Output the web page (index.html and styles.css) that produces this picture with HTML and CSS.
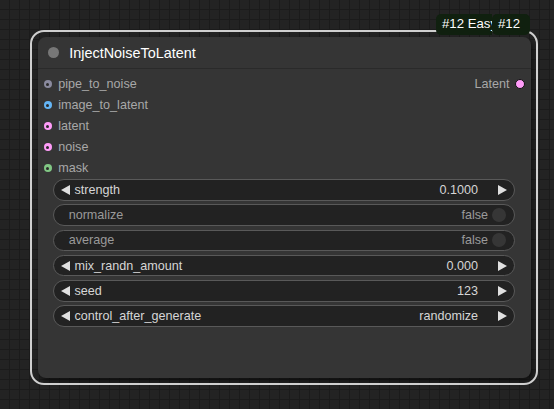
FILE: index.html
```html
<!DOCTYPE html>
<html>
<head>
<meta charset="utf-8">
<link rel="stylesheet" href="styles.css">
</head>
<body>
<div class="canvas">
  <div class="node">
    <div class="title">
      <span class="title-dot"></span>
      <span class="title-text">InjectNoiseToLatent</span>
    </div>
    <div class="body">
      <div class="slots">
        <div class="slot">
          <span class="in"><span class="dot c-pipe"></span>pipe_to_noise</span>
          <span class="out">Latent<span class="odot"></span></span>
        </div>
        <div class="slot"><span class="in"><span class="dot c-image"></span>image_to_latent</span></div>
        <div class="slot"><span class="in"><span class="dot c-latent"></span>latent</span></div>
        <div class="slot"><span class="in"><span class="dot c-latent"></span>noise</span></div>
        <div class="slot"><span class="in"><span class="dot c-mask"></span>mask</span></div>
      </div>
      <div class="widgets">
        <div class="widget num"><span class="arrow left"></span><span class="label">strength</span><span class="value">0.1000</span><span class="arrow right"></span></div>
        <div class="widget toggle"><span class="label dim">normalize</span><span class="value dim">false</span><span class="knob"></span></div>
        <div class="widget toggle"><span class="label dim">average</span><span class="value dim">false</span><span class="knob"></span></div>
        <div class="widget num"><span class="arrow left"></span><span class="label">mix_randn_amount</span><span class="value">0.000</span><span class="arrow right"></span></div>
        <div class="widget num"><span class="arrow left"></span><span class="label">seed</span><span class="value">123</span><span class="arrow right"></span></div>
        <div class="widget num"><span class="arrow left"></span><span class="label">control_after_generate</span><span class="value">randomize</span><span class="arrow right"></span></div>
      </div>
    </div>
  </div>
  <div class="badges">
    <div class="badge first">#12 Easy</div>
    <div class="badge second">#12</div>
  </div>
</div>
</body>
</html>
```
FILE: styles.css
```css
html, body {
  margin: 0;
  padding: 0;
}
body {
  width: 554px;
  height: 409px;
  overflow: hidden;
  background-color: #232323;
  background-image:
    linear-gradient(#1b1b1b 1px, transparent 1px),
    linear-gradient(90deg, #1b1b1b 1px, transparent 1px);
  background-size: 10px 10px;
  background-position: 9px 9px;
  font-family: "Liberation Sans", Arial, sans-serif;
}
.canvas {
  position: relative;
  width: 554px;
  height: 409px;
}
.node {
  position: absolute;
  left: 37.7px;
  top: 36.7px;
  width: 493px;
  height: 341.6px;
  background: #353535;
  border-radius: 8px;
  box-shadow: 2px 3px 5px rgba(0, 0, 0, 0.55);
  display: flex;
  flex-direction: column;
}
.node::before {
  content: "";
  position: absolute;
  left: -7.3px;
  top: -6.3px;
  right: -7.6px;
  bottom: -6.6px;
  border: 2px solid #cfcfcf;
  border-radius: 14px;
  pointer-events: none;
}
.title {
  height: 32px;
  box-sizing: border-box;
  border-bottom: 1px solid #2a2a2a;
  display: flex;
  align-items: center;
  padding-left: 10.2px;
}
.title-dot {
  width: 11px;
  height: 11px;
  border-radius: 50%;
  background: #777;
  flex: none;
}
.title-text {
  margin-left: 10.4px;
  font-size: 14.4px;
  color: #fff;
  position: relative;
  top: 1px;
}
.body {
  padding-top: 5px;
  display: flex;
  flex-direction: column;
}
.slot {
  height: 21px;
  display: flex;
  align-items: center;
  justify-content: space-between;
  padding: 0 5.7px 0 6px;
  font-size: 12.6px;
  color: #a8a8a8;
}
.in, .out {
  display: flex;
  align-items: center;
}
.dot {
  width: 8px;
  height: 8px;
  border-radius: 50%;
  margin-right: 6.6px;
  display: flex;
  align-items: center;
  justify-content: center;
  flex: none;
}
.dot::after {
  content: "";
  width: 3px;
  height: 3px;
  border-radius: 50%;
  background: #2a2a2a;
}
.c-pipe { background: #8a8a9e; }
.c-image { background: #64b5f6; }
.c-latent { background: #ff9cf9; }
.c-mask { background: #81c784; }
.odot {
  width: 8px;
  height: 8px;
  border-radius: 50%;
  background: #ff9cf9;
  border: 1px solid #111;
  margin-left: 5.5px;
}
.widgets {
  margin-top: 0.5px;
  padding: 0 16px 0 15.6px;
  display: flex;
  flex-direction: column;
  gap: 3.6px;
}
.widget {
  height: 21.6px;
  box-sizing: border-box;
  border: 1px solid #595959;
  border-radius: 11px;
  background: #222;
  display: flex;
  align-items: center;
  font-size: 12.6px;
  color: #d6d6d6;
}
.widget.num {
  padding: 0 6.7px;
}
.arrow {
  width: 0;
  height: 0;
  border-top: 5px solid transparent;
  border-bottom: 5px solid transparent;
  flex: none;
}
.arrow.left {
  border-right: 9.5px solid #e0e0e0;
}
.arrow.right {
  border-left: 9.5px solid #e0e0e0;
  margin-left: 20px;
}
.num .label {
  margin-left: 4.5px;
}
.value {
  margin-left: auto;
}
.widget.toggle {
  padding: 0 7.7px 0 14.4px;
}
.dim {
  color: #9a9a9a;
}
.knob {
  width: 14px;
  height: 14px;
  border-radius: 50%;
  background: #363636;
  margin-left: 4px;
  flex: none;
}
.badges {
  position: absolute;
  left: 436px;
  top: 14.3px;
  display: flex;
}
.badge {
  height: 20.7px;
  box-sizing: border-box;
  background: #10200f;
  color: #fff;
  font-size: 13.2px;
  line-height: 20.7px;
  white-space: nowrap;
  overflow: hidden;
  border-radius: 5px;
}
.badge.first {
  width: 55.7px;
  padding-left: 6px;
  border-radius: 5px 0 0 5px;
}
.badge.second {
  width: 38.3px;
  padding-left: 6.3px;
}
```
